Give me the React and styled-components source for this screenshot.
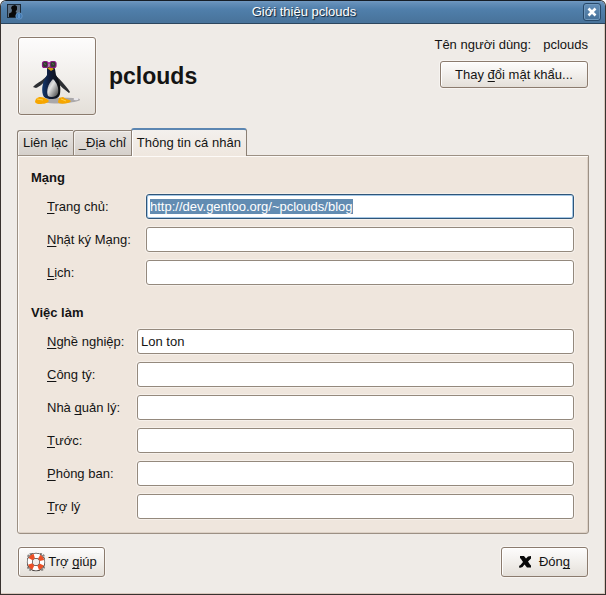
import React, { useEffect, useRef } from "react";
import styled, { createGlobalStyle, css } from "styled-components";

const GlobalStyle = createGlobalStyle`
  *, *::before, *::after { box-sizing: border-box; }
  body {
    margin: 0;
    background: #fff;
    color: #141414;
    font: 13px/16px "Liberation Sans", Arial, sans-serif;
  }
  button, input { font: inherit; color: inherit; margin: 0; }
`;

const Dialog = styled.main`
  display: flex;
  flex-direction: column;
  min-height: 100vh;
  border: 1px solid #38322f;
  border-top-color: #151d26;
  border-radius: 6px 6px 0 0;
  overflow: hidden;
  background: #efebe7;
  box-shadow: inset -1px -1px 0 #d9c7bd;
`;

const TitleBar = styled.header`
  display: grid;
  grid-template-columns: 1fr auto 1fr;
  align-items: center;
  height: 23px;
  padding: 0 4px 0 6px;
  background: linear-gradient(#7199c1 0, #648fb9 2px, #507fab 8px, #49749c 20px);
  border-bottom: 1px solid #2c465e;
`;

const WindowTitle = styled.h1`
  margin: 0;
  font-size: 13px;
  font-weight: 400;
  color: #fff;
  text-shadow: 1px 1px 1px #10202f;
`;

const CloseButton = styled.button`
  display: grid;
  place-items: center;
  justify-self: end;
  width: 18px;
  height: 18px;
  padding: 0;
  border: 1px solid #28496a;
  border-radius: 3px;
  background: linear-gradient(#6590ba, #446f97);
  box-shadow: inset 0 0 0 1px #7098bd;
`;

const Content = styled.div`
  display: flex;
  flex-direction: column;
  padding: 13px 16px 16px;
`;

const ProfileHeader = styled.section`
  display: flex;
  align-items: flex-start;
  justify-content: space-between;
  padding: 0 1px;
`;

const Identity = styled.div`
  display: flex;
  align-items: center;
  gap: 13px;
`;

const raised = css`
  border: 1px solid #8b7b6e;
  border-radius: 3px;
  background: linear-gradient(#fdfcfc, #efece8 60%, #e4dfd9);
  box-shadow: inset 1px 1px 0 #fff, 0 0 0 1px #f7f4f1;
`;

const AvatarButton = styled.button`
  ${raised}
  display: grid;
  place-items: center;
  width: 78px;
  height: 78px;
  padding: 0;
`;

const ProfileName = styled.h2`
  margin: 0;
  font-size: 23px;
  line-height: 28px;
`;

const Account = styled.div`
  display: flex;
  flex-direction: column;
  align-items: flex-end;
  gap: 8px;
`;

const UserLine = styled.dl`
  display: flex;
  gap: 12px;
  margin: 0;
  dd { margin: 0; }
`;

const Button = styled.button`
  ${raised}
  display: flex;
  align-items: center;
  justify-content: center;
  gap: ${(p) => p.$gap || 0}px;
  min-width: ${(p) => p.$width}px;
  height: ${(p) => p.$height || 30}px;
  padding: 0 7px;
`;

const Key = styled.u`
  text-decoration-thickness: 1px;
  text-underline-offset: 2px;
  text-decoration-skip-ink: none;
`;

const TabList = styled.div`
  display: flex;
  align-items: flex-end;
  margin: 13px 0 -1px;
`;

const Tab = styled.button`
  height: 26px;
  padding: 0 5px;
  border: 1px solid #8b7f74;
  border-right-width: 0;
  border-radius: 3px 0 0 0;
  background: linear-gradient(#e8e4e0, #d5d0cb);
  box-shadow: inset 1px 1px 0 #f4f1ee;
  white-space: nowrap;

  &[aria-selected="true"] {
    z-index: 1;
    height: 28px;
    border-top: 2px solid #5c86b2;
    border-right-width: 1px;
    border-bottom: 0;
    border-radius: 3px 3px 0 0;
    background: linear-gradient(#f3f0ed, #efe7df);
    box-shadow: inset 1px 0 0 #fff;
  }
`;

const Panel = styled.div`
  display: flex;
  flex-direction: column;
  gap: 20px;
  padding: 14px 14px 14px 13px;
  border: 1px solid #9c9084;
  border-radius: 0 0 3px 3px;
  background: #efe6dd;
  box-shadow: inset 1px 1px 0 #fdfaf7, inset -1px -1px 0 #ddd1c6;
`;

const Group = styled.section`
  display: flex;
  flex-direction: column;
  gap: 8px;
`;

const GroupTitle = styled.h3`
  margin: 0;
  font-size: 13px;
  line-height: 16px;
`;

const Fields = styled.div`
  display: grid;
  grid-template-columns: ${(p) => p.$labels}px 1fr;
  row-gap: 8px;
  align-items: center;
  padding-left: 16px;
`;

const TextInput = styled.input`
  width: 100%;
  min-width: 0;
  height: 25px;
  padding: 0 3px;
  line-height: 18px;
  border: 1px solid #94897d;
  border-radius: 3px;
  outline: 0;
  background: #fff;
  box-shadow: 0 0 0 1px #f6f0ea;

  &:focus {
    border-color: #2f5579;
    box-shadow: inset 0 0 0 1px #a5c8e6, 0 0 0 1px #f6f0ea;
  }
  &::selection { background: #628cb2; color: #fff; }
`;

const Actions = styled.footer`
  display: flex;
  justify-content: space-between;
  padding: 13px 1px 0;
`;

const groups = [
  {
    title: "Mạng",
    labels: 99,
    fields: [
      { id: "home", label: ["", "T", "rang chủ:"], value: "http://dev.gentoo.org/~pclouds/blog" },
      { id: "weblog", label: ["", "N", "hật ký Mạng:"] },
      { id: "calendar", label: ["", "L", "ịch:"] },
    ],
  },
  {
    title: "Việc làm",
    labels: 90,
    fields: [
      { id: "profession", label: ["", "N", "ghề nghiệp:"], value: "Lon ton" },
      { id: "company", label: ["", "C", "ông tý:"] },
      { id: "manager", label: ["Nhà ", "q", "uản lý:"] },
      { id: "title", label: ["", "T", "ước:"] },
      { id: "department", label: ["", "P", "hòng ban:"] },
      { id: "assistant", label: ["", "T", "rợ lý"] },
    ],
  },
];

const UserIcon = () => (
  <svg width="16" height="16" viewBox="0 0 16 16" aria-hidden="true">
    <rect x="0.5" y="0.5" width="13" height="13" fill="#5f7388" stroke="#1c2b3a" />
    <path d="M2 13V9.5l2.5-1.3L5 6 4 4l1-2 3-1 2 1.500v3L8.500 8l2.500 1.500V13z" fill="#080808" />
    <circle cx="12" cy="12" r="3.200" fill="#3f77b0" stroke="#6c9aca" strokeWidth="0.800" />
    <path d="M12 10v4" stroke="#7fb2e2" />
  </svg>
);

const Penguin = () => (
  <svg width="56" height="56" viewBox="0 0 56 56" aria-hidden="true">
    <defs>
      <linearGradient id="belly" x1="0" x2="1" y1="0" y2="1">
        <stop offset="0" stopColor="#8e9096" />
        <stop offset="0.4" stopColor="#e2e2e2" />
        <stop offset="1" stopColor="#3c3c3c" />
      </linearGradient>
      <linearGradient id="coat">
        <stop offset="0" stopColor="#12386f" />
        <stop offset="0.4" stopColor="#101b38" />
        <stop offset="1" stopColor="#101010" />
      </linearGradient>
    </defs>
    <path d="M13 53c6-3 16-4 31-3 7 0 9 2 5 3-7 2-20 4-36 1z" fill="#aaa8aa" />
    <ellipse cx="47" cy="51" rx="2.500" ry="1.300" fill="#e9e7ea" />
    <path d="M18 28c-3 3-6 5-12 9l-2 2 3 1c5-2 7-5 10-7zM27 28c5 4 8 8 12 13l2 3-1 1c-4-3-9-7-12-11z" fill="#2d2f33" />
    <path d="M18 20c2-2 7-2 8 1l1 6c4 6 5 13 4 19-1 4-4 5-9 5-4 0-7-1-8-4-2-7 0-14 4-20z" fill="url(#coat)" />
    <path d="M24 31c4 4 6 9 5 14-1 4-7 5-10 3-2-5 0-12 5-17z" fill="url(#belly)" />
    <path d="M7 51c3-3 7-2 11 0l2 2c-2 3-7 3-11 3-4-1-3-3-2-5zM30 50l4-1 3 2c6 1 6 3 2 4-4 1-10 1-10-1z" fill="#f6a600" />
    <path d="M8 51l6 1M32 51l5 2" stroke="#ffd247" />
    <path d="M18 20l4-1 3 2-3 2z" fill="#d59b12" />
    <rect x="13.500" y="13.500" width="5.500" height="6" rx="2" fill="#333b30" stroke="#8b1883" strokeWidth="1.200" />
    <rect x="21" y="13.500" width="6" height="6" rx="2" fill="#333b30" stroke="#8b1883" strokeWidth="1.200" />
    <path d="M19 15h2" stroke="#b021a4" strokeWidth="1.500" />
    <path d="M15 15.500l2 1M23 15.500l2 1" stroke="#5d7058" />
  </svg>
);

const LifeRing = () => (
  <svg width="20" height="20" viewBox="0 0 20 20" aria-hidden="true">
    <rect x="2" y="2" width="16" height="16" rx="3" fill="none" stroke="#8a8582" strokeWidth="2" strokeDasharray="2 1" />
    <circle cx="10" cy="10" r="6.200" fill="none" stroke="#4a4441" strokeWidth="6" />
    <circle cx="10" cy="10" r="6.200" fill="none" stroke="#fff" strokeWidth="4.600" />
    <circle
      cx="10" cy="10" r="6.200" fill="none" stroke="#ec5026" strokeWidth="4.600"
      strokeDasharray="4.600 5.140" strokeDashoffset="-2.570"
    />
  </svg>
);

const Cross = () => (
  <svg width="12" height="12" viewBox="0 0 12 12" aria-hidden="true">
    <path d="M1 0h4l2 2.500L9 .5l3-.5v2.500L9 5.500l2 3 1 1v2H8L5.500 8.500l-2 2.500-3 1L0 10l1.500-1L4 6 2 3 1 2z" fill="#080808" />
  </svg>
);

const Mnemonic = ({ parts: [before, key, after] }) => (
  <>{before}<Key>{key}</Key>{after}</>
);

export default function App() {
  const homeRef = useRef(null);

  useEffect(() => {
    homeRef.current.focus();
    homeRef.current.select();
  }, []);

  return (
    <>
      <GlobalStyle />
      <Dialog>
        <TitleBar>
          <UserIcon />
          <WindowTitle>Giới thiệu pclouds</WindowTitle>
          <CloseButton aria-label="Đóng">
            <svg width="10" height="10" viewBox="0 0 10 10" aria-hidden="true">
              <path d="M1.500 1.500l7 7M8.500 1.500l-7 7" stroke="#fff" strokeWidth="2.600" />
            </svg>
          </CloseButton>
        </TitleBar>
        <Content>
          <ProfileHeader>
            <Identity>
              <AvatarButton aria-label="pclouds"><Penguin /></AvatarButton>
              <ProfileName>pclouds</ProfileName>
            </Identity>
            <Account>
              <UserLine><dt>Tên người dùng:</dt><dd>pclouds</dd></UserLine>
              <Button $width={148} $height={27}>
                <span><Mnemonic parts={["Thay ", "đ", "ổi mật khẩu..."]} /></span>
              </Button>
            </Account>
          </ProfileHeader>
          <TabList role="tablist">
            <Tab role="tab" aria-selected="false">Liên lạc</Tab>
            <Tab role="tab" aria-selected="false">_Địa chỉ</Tab>
            <Tab role="tab" aria-selected="true" id="personal-tab" aria-controls="personal">
              Thông tin cá nhân
            </Tab>
          </TabList>
          <Panel role="tabpanel" id="personal" aria-labelledby="personal-tab">
            {groups.map((group) => (
              <Group key={group.title}>
                <GroupTitle>{group.title}</GroupTitle>
                <Fields $labels={group.labels}>
                  {group.fields.map(({ id, label, value }) => (
                    <React.Fragment key={id}>
                      <label htmlFor={id}><Mnemonic parts={label} /></label>
                      <TextInput
                        id={id}
                        type="text"
                        defaultValue={value}
                        spellCheck={false}
                        ref={id === "home" ? homeRef : undefined}
                      />
                    </React.Fragment>
                  ))}
                </Fields>
              </Group>
            ))}
          </Panel>
          <Actions>
            <Button $width={87} $gap={2}>
              <LifeRing /><span><Mnemonic parts={["Trợ ", "g", "iúp"]} /></span>
            </Button>
            <Button $width={87} $gap={8}>
              <Cross /><span><Mnemonic parts={["Đón", "g", ""]} /></span>
            </Button>
          </Actions>
        </Content>
      </Dialog>
    </>
  );
}
